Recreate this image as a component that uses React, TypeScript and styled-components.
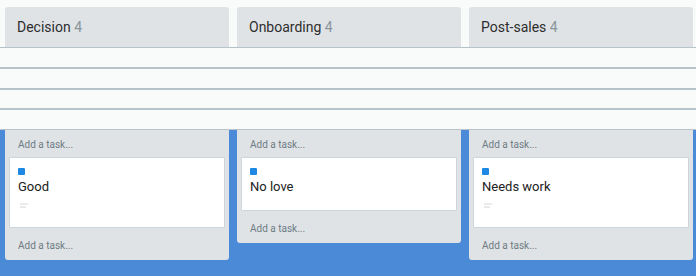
import React from "react";
import styled, { createGlobalStyle } from "styled-components";

const GlobalStyle = createGlobalStyle`
  html, body { margin: 0; padding: 0; }
  body { font-family: Roboto, "Liberation Sans", sans-serif; }
  * { box-sizing: border-box; }
`;

const Page = styled.div`
  position: relative;
  width: 696px;
  height: 276px;
  overflow: hidden;
  background: linear-gradient(to bottom, #f9fafa 0, #f9fafa 47px, #4a8ad7 47px);
`;

const Board = styled.div`
  display: flex;
  align-items: flex-start;
  gap: 8px;
  padding: 7px 3px 0 5px;
`;

const Column = styled.section`
  width: 224px;
  flex: 0 0 224px;
  background: #dfe3e6;
  border-radius: 3px;
  padding-bottom: 3px;
  display: flex;
  flex-direction: column;
`;

const Header = styled.header`
  height: 40px;
  line-height: 40px;
  padding: 0 12px;
  font-size: 14px;
  color: #2e2e2e;
`;

const Count = styled.span`
  color: #8a959c;
`;

const Lane = styled.div`
  height: 87px;
`;

const AddTask = styled.div`
  padding: 4px 13px;
  font-size: 10px;
  line-height: 14px;
  color: #6f7b84;
`;

const Card = styled.article`
  margin: 1px 4px 7px;
  background: #ffffff;
  border: 1px solid #cfd6db;
  border-radius: 1px;
  padding: 10px 8px 15px;
`;

const Label = styled.span`
  display: block;
  width: 7px;
  height: 7px;
  border-radius: 1px;
  background: #1e88e5;
`;

const Title = styled.div`
  margin-top: 4px;
  font-size: 13px;
  line-height: 16px;
  color: #222;
`;

const Meta = styled.div`
  height: 17px;
  padding-top: 8px;
  display: flex;
  align-items: flex-start;
`;

const Overlay = styled.div`
  position: absolute;
  left: 0;
  right: 0;
  top: 47px;
  display: flex;
  flex-direction: column;
`;

const Stripe = styled.div`
  height: 20.75px;
  background: #f9fafa;
  border-top: 1px solid #b7c2c9;
  border-bottom: 1px solid #b7c2c9;
`;

const NotesIcon = () => (
  <svg width="10" height="6" viewBox="0 0 10 6">
    <rect x="2" y="0.5" width="8" height="1.2" fill="#d9dee1" />
    <rect x="2" y="3.5" width="6" height="1.2" fill="#d9dee1" />
  </svg>
);

type Task = { title: string; notes: boolean };
type Col = { name: string; count: number; tasks: Task[] };

const columns: Col[] = [
  { name: "Decision", count: 4, tasks: [{ title: "Good", notes: true }] },
  { name: "Onboarding", count: 4, tasks: [{ title: "No love", notes: false }] },
  { name: "Post-sales", count: 4, tasks: [{ title: "Needs work", notes: true }] },
];

export default function App() {
  return (
    <Page>
      <GlobalStyle />
      <Board>
        {columns.map((c) => (
          <Column key={c.name}>
            <Header>
              {c.name} <Count>{c.count}</Count>
            </Header>
            <Lane />
            <AddTask>Add a task...</AddTask>
            {c.tasks.map((t) => (
              <Card key={t.title}>
                <Label />
                <Title>{t.title}</Title>
                {t.notes && (
                  <Meta>
                    <NotesIcon />
                  </Meta>
                )}
              </Card>
            ))}
            <AddTask>Add a task...</AddTask>
          </Column>
        ))}
      </Board>
      <Overlay>
        <Stripe />
        <Stripe />
        <Stripe />
        <Stripe />
      </Overlay>
    </Page>
  );
}
